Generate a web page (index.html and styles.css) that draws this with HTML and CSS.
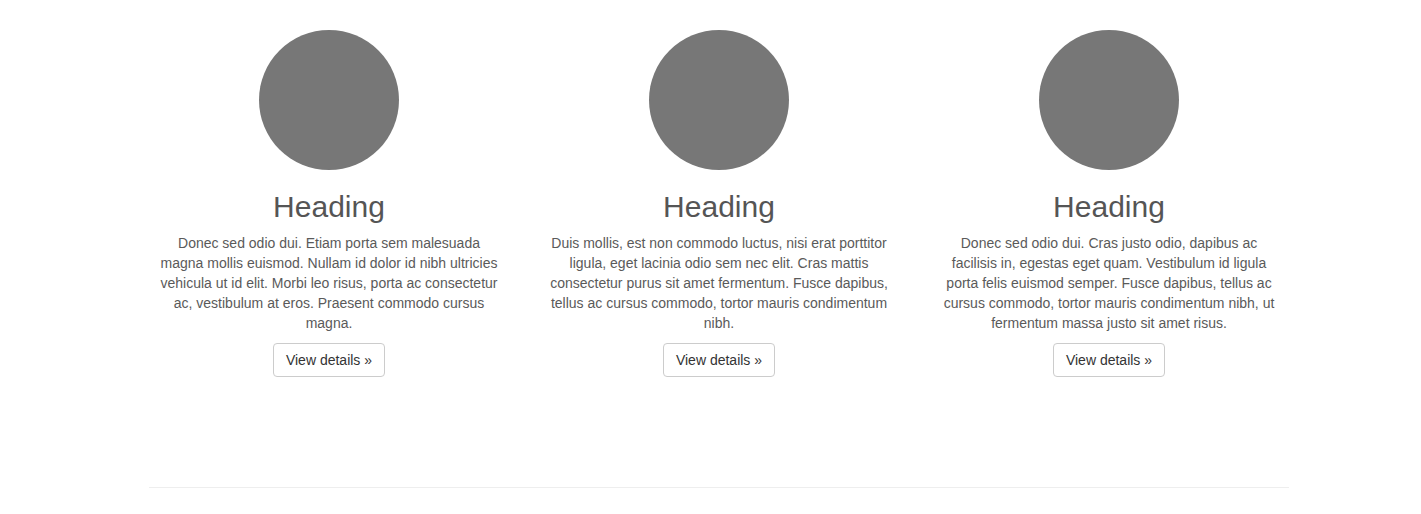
FILE: index.html
```html
<!DOCTYPE html>
<html>
<head>
<meta charset="utf-8">
<link rel="stylesheet" href="styles.css">
</head>
<body>
<div class="container marketing">
  <div class="row">
    <div class="col">
      <div class="circle"></div>
      <h2>Heading</h2>
      <p>Donec sed odio dui. Etiam porta sem malesuada magna mollis euismod. Nullam id dolor id nibh ultricies vehicula ut id elit. Morbi leo risus, porta ac consectetur ac, vestibulum at eros. Praesent commodo cursus magna.</p>
      <p><a class="btn" href="#">View details &raquo;</a></p>
    </div>
    <div class="col">
      <div class="circle"></div>
      <h2>Heading</h2>
      <p>Duis mollis, est non commodo luctus, nisi erat porttitor ligula, eget lacinia odio sem nec elit. Cras mattis consectetur purus sit amet fermentum. Fusce dapibus, tellus ac cursus commodo, tortor mauris condimentum nibh.</p>
      <p><a class="btn" href="#">View details &raquo;</a></p>
    </div>
    <div class="col">
      <div class="circle"></div>
      <h2>Heading</h2>
      <p>Donec sed odio dui. Cras justo odio, dapibus ac facilisis in, egestas eget quam. Vestibulum id ligula porta felis euismod semper. Fusce dapibus, tellus ac cursus commodo, tortor mauris condimentum nibh, ut fermentum massa justo sit amet risus.</p>
      <p><a class="btn" href="#">View details &raquo;</a></p>
    </div>
  </div>
  <hr class="divider">
</div>
</body>
</html>
```
FILE: styles.css
```css
html, body {
  margin: 0;
  padding: 0;
  background: #fff;
}
body {
  font-family: "Liberation Sans", Arial, sans-serif;
  font-size: 14px;
  line-height: 20px;
  color: #5a5a5a;
}
.container {
  width: 1170px;
  box-sizing: border-box;
  margin-left: 134px;
  padding: 0 15px;
}
.row {
  display: flex;
  margin: 0 -15px;
}
.col {
  width: 390px;
  box-sizing: border-box;
  padding: 30px 25px 0;
  margin-bottom: 20px;
  text-align: center;
}
.circle {
  width: 140px;
  height: 140px;
  border-radius: 50%;
  background: #777;
  margin: 0 auto;
}
h2 {
  font-size: 30px;
  font-weight: 400;
  line-height: 33px;
  margin: 20px 0 10px;
  color: #555;
}
p {
  margin: 0 0 10px;
}
.btn {
  display: inline-block;
  box-sizing: border-box;
  height: 34px;
  padding: 6px 12px;
  border: 1px solid #ccc;
  border-radius: 4px;
  color: #333;
  background: #fff;
  text-decoration: none;
  line-height: 20px;
}
.divider {
  margin: 80px 0 20px;
  border: 0;
  border-top: 1px solid #eee;
}
```
